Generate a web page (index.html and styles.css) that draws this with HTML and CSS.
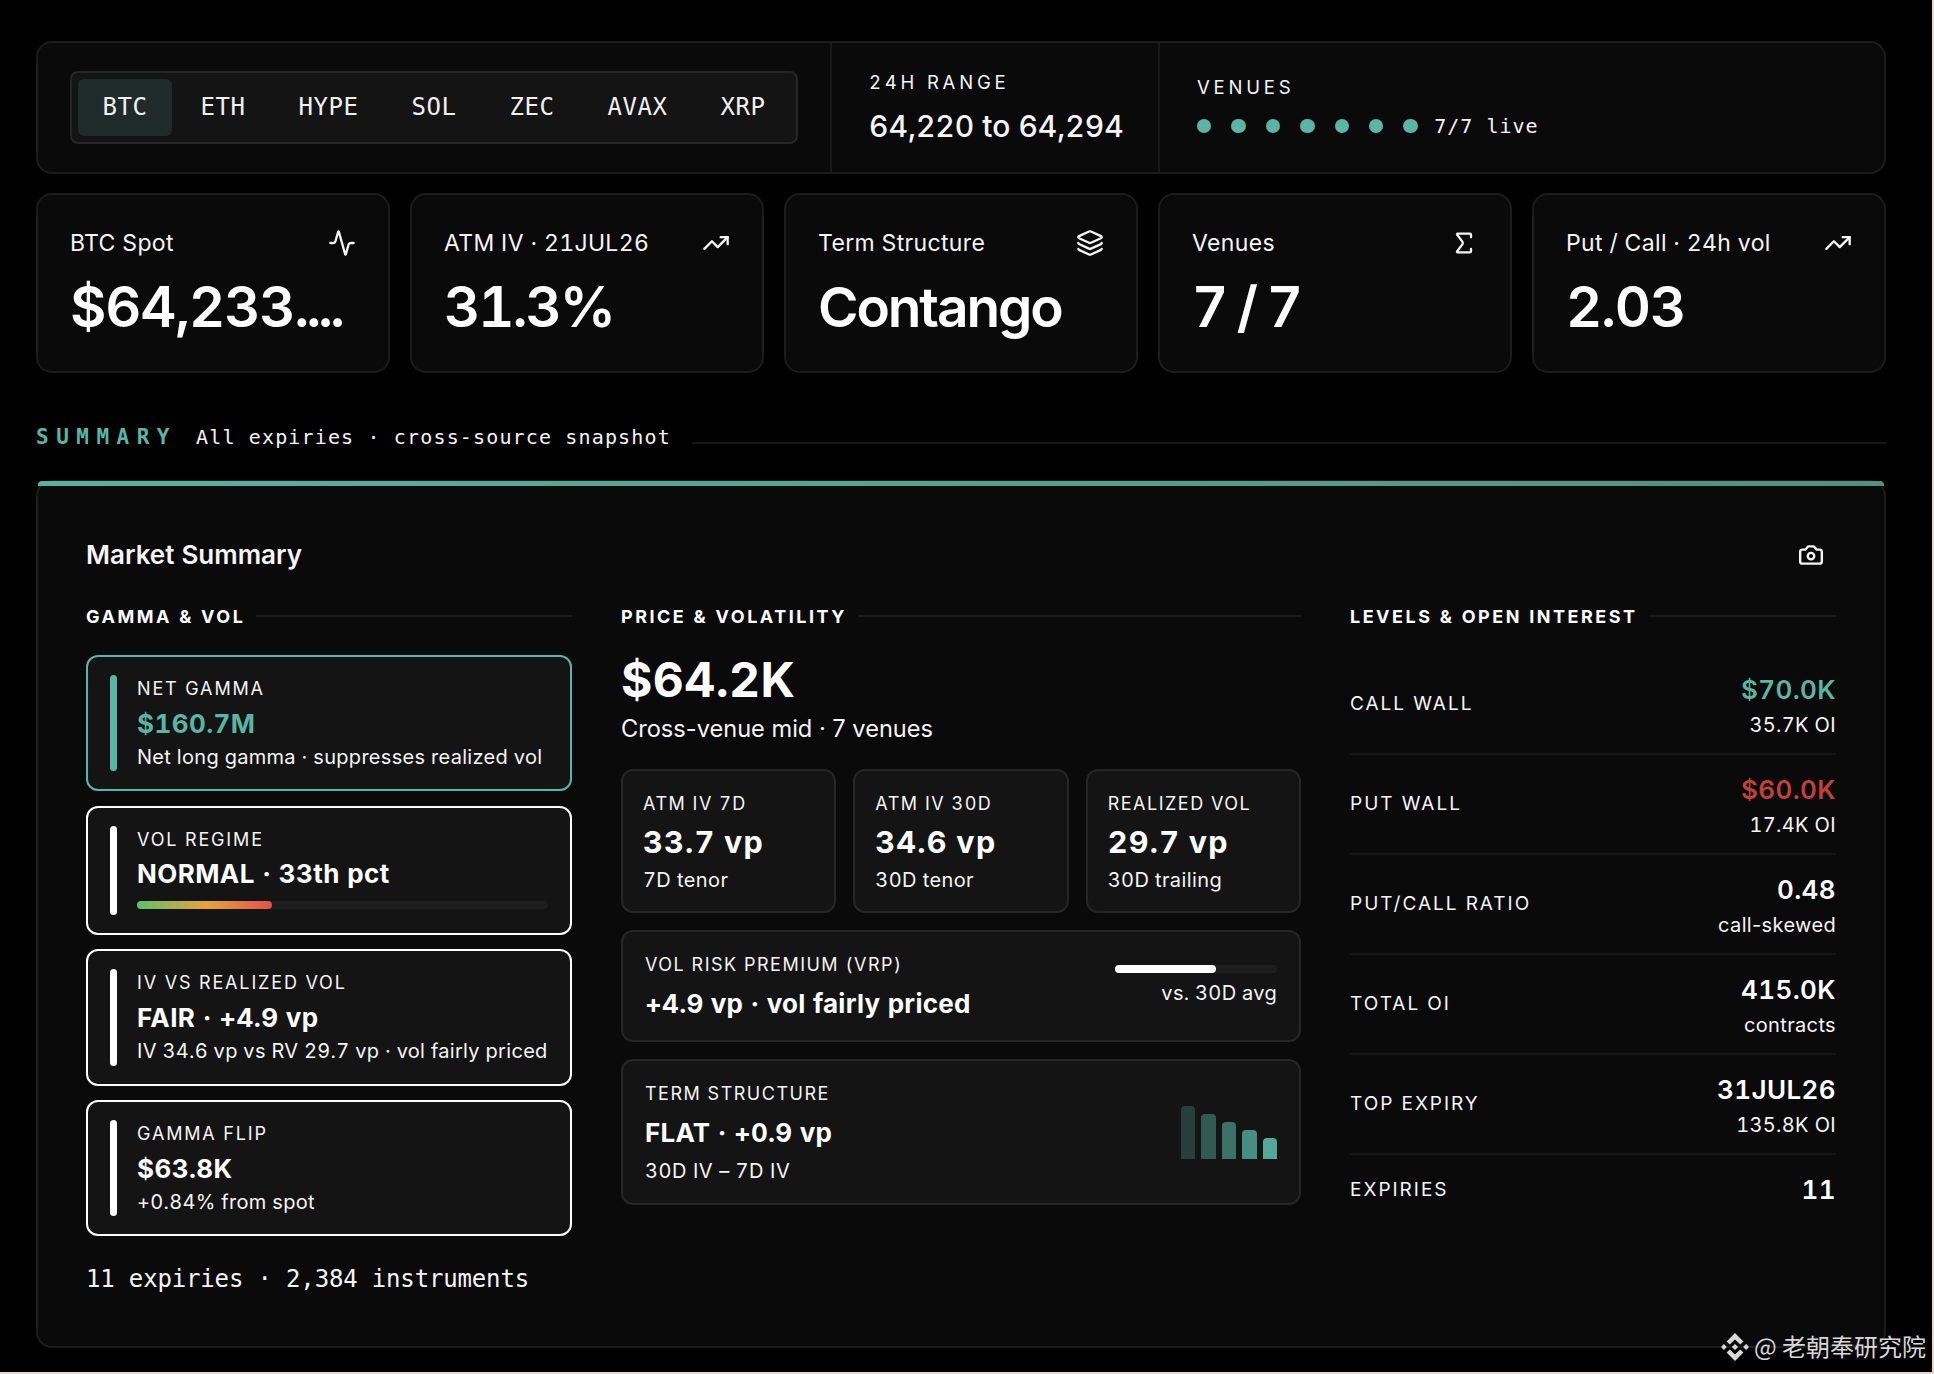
FILE: index.html
```html
<!DOCTYPE html>
<html lang="en">
<head>
    <meta charset="UTF-8">
    <title>Options Dashboard</title>
    <link rel="stylesheet" href="styles.css">
</head>

<body>

<div class="app">
    <div class="topbar">
        <div class="topbar-cell">
            <div class="tabs">
                <button class="tab active">BTC</button>
                <button class="tab">ETH</button>
                <button class="tab">HYPE</button>
                <button class="tab">SOL</button>
                <button class="tab">ZEC</button>
                <button class="tab">AVAX</button>
                <button class="tab">XRP</button>
            </div>
        </div>
        <div class="topbar-cell range">
            <div class="topbar-label">24H RANGE</div>
            <div class="range-value">64,220 to 64,294</div>
        </div>
        <div class="topbar-cell venues">
            <div class="topbar-label">VENUES</div>
            <div class="venue-dots">
                <i></i><i></i><i></i><i></i><i></i><i></i><i></i>
                <span>7/7 live</span>
            </div>
        </div>
    </div>

    <div class="stats">
        <div class="stat">
            <div class="stat-head">
                <span>BTC Spot</span>
                <svg class="icon" viewBox="0 0 24 24"><path d="M22 12h-2.48a2 2 0 0 0-1.93 1.46l-2.35 8.36a.25.25 0 0 1-.48 0L9.24 2.18a.25.25 0 0 0-.48 0l-2.35 8.36A2 2 0 0 1 4.49 12H2"/></svg>
            </div>
            <div class="stat-value">$64,233<span class="dots">....</span></div>
        </div>
        <div class="stat">
            <div class="stat-head">
                <span>ATM IV · 21JUL26</span>
                <svg class="icon" viewBox="0 0 24 24"><path d="M16 7h6v6"/><path d="m22 7-8.5 8.5-5-5L2 17"/></svg>
            </div>
            <div class="stat-value percent">31.3%</div>
        </div>
        <div class="stat">
            <div class="stat-head">
                <span>Term Structure</span>
                <svg class="icon" viewBox="0 0 24 24"><path d="M12.83 2.18a2 2 0 0 0-1.66 0L2.6 6.08a1 1 0 0 0 0 1.83l8.58 3.91a2 2 0 0 0 1.66 0l8.58-3.9a1 1 0 0 0 0-1.83z"/><path d="M2 12a1 1 0 0 0 .58.91l8.6 3.91a2 2 0 0 0 1.65 0l8.58-3.9A1 1 0 0 0 22 12"/><path d="M2 17a1 1 0 0 0 .58.91l8.6 3.91a2 2 0 0 0 1.65 0l8.58-3.9A1 1 0 0 0 22 17"/></svg>
            </div>
            <div class="stat-value word">Contango</div>
        </div>
        <div class="stat">
            <div class="stat-head">
                <span>Venues</span>
                <svg class="icon" viewBox="0 0 24 24"><path d="M18 7V5a1 1 0 0 0-1-1H6.5a.5.5 0 0 0-.4.8l4.5 6a2 2 0 0 1 0 2.4l-4.5 6a.5.5 0 0 0 .4.8H17a1 1 0 0 0 1-1v-2"/></svg>
            </div>
            <div class="stat-value">7 / 7</div>
        </div>
        <div class="stat">
            <div class="stat-head">
                <span>Put / Call · 24h vol</span>
                <svg class="icon" viewBox="0 0 24 24"><path d="M16 7h6v6"/><path d="m22 7-8.5 8.5-5-5L2 17"/></svg>
            </div>
            <div class="stat-value">2.03</div>
        </div>
    </div>

    <div class="section-title">
        <h2>SUMMARY</h2>
        <span>All expiries · cross-source snapshot</span>
        <hr>
    </div>

    <div class="summary">
        <div class="summary-head">
            <h3>Market Summary</h3>
            <svg class="icon camera" viewBox="0 0 24 24"><path d="M14.5 4h-5L7 7H4a2 2 0 0 0-2 2v9a2 2 0 0 0 2 2h16a2 2 0 0 0 2-2V9a2 2 0 0 0-2-2h-3l-2.5-3z"/><circle cx="12" cy="13" r="3"/></svg>
        </div>

        <div class="columns">
            <div class="column">
                <h4>GAMMA &amp; VOL</h4>
                <div class="signals">
                    <div class="signal positive">
                        <div class="signal-body">
                            <div class="label">NET GAMMA</div>
                            <div class="value">$160.7M</div>
                            <div class="note">Net long gamma · suppresses realized vol</div>
                        </div>
                    </div>
                    <div class="signal">
                        <div class="signal-body">
                            <div class="label">VOL REGIME</div>
                            <div class="value">NORMAL · 33th pct</div>
                            <div class="meter regime"><div style="width: 32.8%"></div></div>
                        </div>
                    </div>
                    <div class="signal">
                        <div class="signal-body">
                            <div class="label">IV VS REALIZED VOL</div>
                            <div class="value">FAIR · +4.9 vp</div>
                            <div class="note">IV 34.6 vp vs RV 29.7 vp · vol fairly priced</div>
                        </div>
                    </div>
                    <div class="signal">
                        <div class="signal-body">
                            <div class="label">GAMMA FLIP</div>
                            <div class="value">$63.8K</div>
                            <div class="note">+0.84% from spot</div>
                        </div>
                    </div>
                </div>
            </div>

            <div class="column">
                <h4>PRICE &amp; VOLATILITY</h4>
                <div class="price">$64.2K</div>
                <div class="price-note">Cross-venue mid · 7 venues</div>
                <div class="tiles">
                    <div class="tile">
                        <div class="label">ATM IV 7D</div>
                        <div class="tile-value">33.7 vp</div>
                        <div class="note">7D tenor</div>
                    </div>
                    <div class="tile">
                        <div class="label">ATM IV 30D</div>
                        <div class="tile-value">34.6 vp</div>
                        <div class="note">30D tenor</div>
                    </div>
                    <div class="tile">
                        <div class="label">REALIZED VOL</div>
                        <div class="tile-value">29.7 vp</div>
                        <div class="note">30D trailing</div>
                    </div>
                </div>
                <div class="panel vrp">
                    <div>
                        <div class="label">VOL RISK PREMIUM (VRP)</div>
                        <div class="value">+4.9 vp · vol fairly priced</div>
                    </div>
                    <div class="vrp-side">
                        <div class="meter"><div style="width: 62.5%"></div></div>
                        <div class="note">vs. 30D avg</div>
                    </div>
                </div>
                <div class="panel term">
                    <div>
                        <div class="label">TERM STRUCTURE</div>
                        <div class="value">FLAT · +0.9 vp</div>
                        <div class="note">30D IV – 7D IV</div>
                    </div>
                    <div class="bars">
                        <div style="height: 53px; opacity: .27"></div>
                        <div style="height: 45px; opacity: .43"></div>
                        <div style="height: 37px; opacity: .58"></div>
                        <div style="height: 29px; opacity: .75"></div>
                        <div style="height: 21px; opacity: .92"></div>
                    </div>
                </div>
            </div>

            <div class="column">
                <h4>LEVELS &amp; OPEN INTEREST</h4>
                <div class="levels">
                    <div class="level">
                        <span class="level-name">CALL WALL</span>
                        <div><div class="level-value call">$70.0K</div><div class="level-note">35.7K OI</div></div>
                    </div>
                    <div class="level">
                        <span class="level-name">PUT WALL</span>
                        <div><div class="level-value put">$60.0K</div><div class="level-note">17.4K OI</div></div>
                    </div>
                    <div class="level">
                        <span class="level-name">PUT/CALL RATIO</span>
                        <div><div class="level-value">0.48</div><div class="level-note words">call-skewed</div></div>
                    </div>
                    <div class="level">
                        <span class="level-name">TOTAL OI</span>
                        <div><div class="level-value">415.0K</div><div class="level-note words">contracts</div></div>
                    </div>
                    <div class="level">
                        <span class="level-name">TOP EXPIRY</span>
                        <div><div class="level-value">31JUL26</div><div class="level-note">135.8K OI</div></div>
                    </div>
                    <div class="level">
                        <span class="level-name">EXPIRIES</span>
                        <div><div class="level-value">11</div></div>
                    </div>
                </div>
            </div>
        </div>

        <div class="summary-foot">11 expiries · 2,384 instruments</div>
    </div>
</div>

<div class="watermark">
    <svg viewBox="0 0 28 28"><path d="M8.8 11.6 14 6.4l5.2 5.2 3.2-3.2L14 0 5.6 8.4zM0 14l2.9-2.9L5.8 14l-2.9 2.9zM8.8 16.4 14 21.6l5.2-5.2 3.2 3.2L14 28l-8.4-8.4zM22.2 14l2.9-2.9L28 14l-2.9 2.9zM10.9 14l3.1-3.1 3.1 3.1-3.1 3.1z"/></svg>
    <span>@ 老朝奉研究院</span>
</div>

</body>
</html>
```
FILE: styles.css
```css
:root {
    --teal: #5ab5a5;
    --red: #c23f3a;
    --card: #0a0a0a;
    --panel: #141414;
    --line: #1c1c1c;
    --panel-line: #262626;
    --mono: "DejaVu Sans Mono", monospace;
}

* {
    box-sizing: border-box;
}

body {
    margin: 0;
    height: 1374px;
    overflow: hidden;
    background: #000;
    border-right: 2px solid #e6d6cb;
    border-bottom: 2px solid #e6d6cb;
    color: #f5f5f5;
    font-family: Inter, sans-serif;
    font-variant-numeric: tabular-nums;
}

h2, h3, h4 {
    margin: 0;
}

.app {
    padding: 41px 46px 0 36px;
}

.icon {
    width: 28px;
    height: 28px;
    flex: none;
    fill: none;
    stroke: #f5f5f5;
    stroke-width: 2;
    stroke-linecap: round;
    stroke-linejoin: round;
}

/* top bar */
.topbar {
    display: flex;
    height: 133px;
    background: var(--card);
    border: 2px solid var(--line);
    border-radius: 16px;
}
.topbar-cell {
    display: flex;
    flex-direction: column;
    justify-content: center;
    padding-left: 32px;
    padding-bottom: 1px;
}
.topbar-cell + .topbar-cell {
    padding-left: 37px;
    border-left: 2px solid #181818;
}
.range {
    width: 328px;
    gap: 10px;
}
.tabs {
    display: flex;
    gap: 4px;
    height: 73px;
    margin-right: 32px;
    padding: 6px;
    background: var(--panel);
    border: 2px solid var(--panel-line);
    border-radius: 8px;
}
.tab {
    padding: 0 24.5px;
    border: 0;
    border-radius: 6px;
    background: none;
    color: #f0f0f0;
    font: 24px var(--mono);
    letter-spacing: .55px;
}
.tab.active {
    background: #1f2b29;
}
.topbar-label {
    font-size: 18.5px;
    line-height: 28px;
    letter-spacing: 3.8px;
}
.range-value {
    font-size: 30px;
    line-height: 40px;
    font-weight: 500;
}
.topbar .venues {
    gap: 12px;
    padding-bottom: 3px;
}
.venue-dots {
    display: flex;
    align-items: center;
    gap: 20px;
}
.venue-dots i {
    width: 14.4px;
    height: 14.4px;
    border-radius: 50%;
    background: var(--teal);
}
.venue-dots span {
    margin-left: -3.5px;
    font: 20px/27px var(--mono);
    letter-spacing: 1px;
}

/* stat cards */
.stats {
    display: grid;
    grid-template-columns: repeat(5, 1fr);
    gap: 20px;
    margin-top: 19px;
}
.stat {
    min-width: 0;
    height: 180px;
    padding: 32px;
    background: var(--card);
    border: 2px solid var(--line);
    border-radius: 16px;
}
.stat-head {
    display: flex;
    align-items: center;
    justify-content: space-between;
    height: 31px;
    font-size: 23px;
    letter-spacing: .35px;
}
.stat-value {
    margin-top: 14px;
    font-size: 56px;
    line-height: 70px;
    font-weight: 600;
    letter-spacing: -1.2px;
    word-spacing: -4px;
    white-space: nowrap;
    color: #fff;
}
.stat-value.percent {
    letter-spacing: -2px;
}
.stat-value.word {
    font-size: 55px;
    letter-spacing: -2.1px;
}
.stat-value .dots {
    letter-spacing: -3.1px;
}

/* section heading */
.section-title {
    display: flex;
    align-items: center;
    height: 40px;
    margin-top: 44px;
    font-family: var(--mono);
}
.section-title h2 {
    width: 160px;
    color: var(--teal);
    font-size: 21px;
    letter-spacing: 7.5px;
}
.section-title span {
    font-size: 20px;
    letter-spacing: 1.15px;
}
.section-title hr {
    flex: 1;
    height: 2px;
    margin: 11px 0 0 21px;
    border: 0;
    background: #161616;
}

/* market summary */
.summary {
    height: 868px;
    margin-top: 23px;
    padding: 47px 48px 48px;
    position: relative;
    background: var(--card);
    border: 2px solid var(--line);
    border-radius: 16px;
}
.summary::before {
    content: "";
    position: absolute;
    top: -1px;
    left: 0;
    right: 0;
    height: 5px;
    border-radius: 4px 4px 0 0;
    background: linear-gradient(90deg, #5cb0a0, #548f84);
}
.summary-head {
    display: flex;
    align-items: center;
    justify-content: space-between;
    height: 50px;
    padding-right: 12px;
}
.summary-head h3 {
    font-size: 26px;
    font-weight: 600;
}
.camera {
    width: 26px;
    height: 26px;
    margin-top: 2px;
    stroke-width: 2.2;
}
.columns {
    display: grid;
    grid-template-columns: 486px 1fr 486px;
    gap: 49px;
    height: 659px;
    margin-top: 22px;
}
h4 {
    display: flex;
    align-items: center;
    gap: 11px;
    height: 30px;
    font-size: 18px;
    font-weight: 700;
    letter-spacing: 2.5px;
    color: #fff;
}
h4::after {
    content: "";
    flex: 1;
    height: 2px;
    background: #1a1a1a;
}
.label {
    font-size: 18px;
    line-height: 27px;
    letter-spacing: 1.5px;
}
.value {
    margin-top: 4px;
    font-size: 26px;
    line-height: 34px;
    font-weight: 700;
    letter-spacing: .42px;
    color: #fff;
}
.note {
    font-size: 20px;
    line-height: 30px;
    letter-spacing: .3px;
    white-space: nowrap;
}
.signals {
    display: grid;
    gap: 14.4px;
    margin-top: 24px;
}
.signal {
    display: flex;
    gap: 20px;
    padding: 18px 22px;
    background: var(--panel);
    border: 2px solid #fff;
    border-radius: 12px;
}
.signal::before {
    content: "";
    flex: none;
    width: 7px;
    border-radius: 4px;
    background: #fff;
}
.signal-body {
    flex: 1;
    min-width: 0;
    height: 96.2px;
}
.signal:nth-child(2) .signal-body {
    height: 89.5px;
}
.signal .label {
    letter-spacing: 1.85px;
}
.signal .value {
    margin-top: 4.5px;
}
.signal .note {
    margin-top: 1.5px;
}
.signal.positive {
    border-color: var(--teal);
}
.signal.positive::before {
    background: var(--teal);
}
.signal.positive .value {
    color: var(--teal);
}
.meter {
    height: 8px;
    border-radius: 4px;
    background: #1e1e1e;
}
.meter div {
    height: 100%;
    border-radius: 4px;
    background: #fff;
}
.meter.regime {
    margin-top: 9.5px;
}
.meter.regime div {
    background: linear-gradient(90deg, #5fc06a, #e8a33c 52%, #e0524c);
}

.price {
    margin-top: 20px;
    font-size: 48px;
    line-height: 58px;
    font-weight: 700;
    letter-spacing: .4px;
    color: #fff;
}
.price-note {
    font-size: 23.6px;
    line-height: 39px;
    font-variant-numeric: normal;
}
.tiles {
    display: grid;
    grid-template-columns: repeat(3, 1fr);
    gap: 17px;
    margin-top: 21px;
}
.tile, .panel {
    background: var(--panel);
    border: 2px solid var(--panel-line);
    border-radius: 12px;
}
.tile {
    height: 144px;
    padding: 18.5px 20px 0;
}
.tile-value {
    font-size: 30.5px;
    line-height: 40px;
    margin: 5px 0 3px;
    font-weight: 700;
    letter-spacing: 1.3px;
    word-spacing: -1px;
    color: #fff;
}
.tile .note {
    letter-spacing: .4px;
}
.panel {
    display: flex;
    justify-content: space-between;
    margin-top: 17px;
    padding: 18.5px 22px 0;
}
.panel .value {
    margin-top: 9px;
    letter-spacing: .27px;
}
.vrp {
    height: 112px;
}
.vrp-side {
    width: 162px;
    padding-top: 14px;
    text-align: right;
}
.vrp-side .note {
    margin-top: 5px;
}
.term {
    height: 145.5px;
}
.term .note {
    margin-top: 6px;
    letter-spacing: .55px;
}
.bars {
    display: flex;
    align-items: flex-end;
    gap: 6px;
    height: 79px;
}
.bars div {
    width: 14.4px;
    border-radius: 4px 4px 0 0;
    background: var(--teal);
}

.levels {
    margin-top: 24px;
}
.level {
    display: flex;
    align-items: center;
    justify-content: space-between;
    padding: 16px 0 18px;
    border-bottom: 2px solid #161616;
    text-align: right;
}
.level:last-child {
    border-bottom: 0;
}
.level-name {
    font-size: 19px;
    letter-spacing: 2px;
}
.level-value {
    height: 37px;
    font-size: 26px;
    line-height: 37px;
    font-weight: 600;
    letter-spacing: .4px;
    color: #fff;
}
.level-value.call {
    color: var(--teal);
}
.level-value.put {
    color: var(--red);
}
.level-note {
    margin-top: 7px;
    font-size: 20px;
    line-height: 20px;
    letter-spacing: .35px;
}
.level-note.words {
    font-variant-numeric: normal;
}
.summary-foot {
    font: 24px/36px var(--mono);
    letter-spacing: -.16px;
    margin-top: 1px;
}

.watermark {
    position: absolute;
    right: 8px;
    top: 1328px;
    display: flex;
    align-items: center;
    gap: 5px;
    color: #d8d8d8;
    font: 24px/36px "Noto Sans CJK SC", sans-serif;
}
.watermark svg {
    width: 28px;
    height: 28px;
    margin-top: 1px;
    fill: #d8d8d8;
}
```
